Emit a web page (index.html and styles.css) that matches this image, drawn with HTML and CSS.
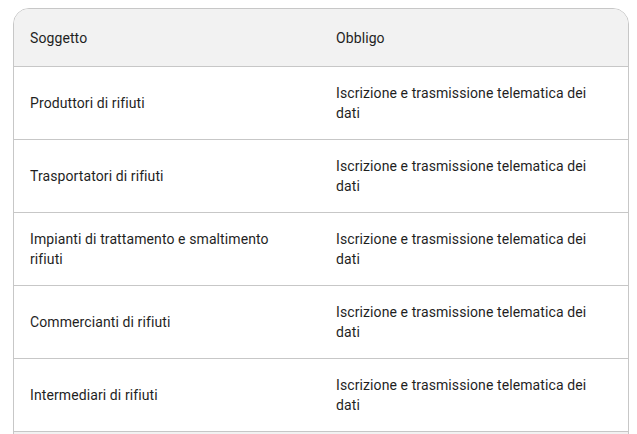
FILE: index.html
```html
<!DOCTYPE html>
<html lang="it">
<head>
<meta charset="utf-8">
<link rel="stylesheet" href="styles.css">
</head>
<body>
<div class="card">
  <table class="grid">
    <thead>
      <tr><th class="c1">Soggetto</th><th class="c2">Obbligo</th></tr>
    </thead>
    <tbody>
      <tr><td class="c1">Produttori di rifiuti</td><td class="c2">Iscrizione e trasmissione telematica dei dati</td></tr>
      <tr><td class="c1">Trasportatori di rifiuti</td><td class="c2">Iscrizione e trasmissione telematica dei dati</td></tr>
      <tr><td class="c1">Impianti di trattamento e smaltimento rifiuti</td><td class="c2">Iscrizione e trasmissione telematica dei dati</td></tr>
      <tr><td class="c1">Commercianti di rifiuti</td><td class="c2">Iscrizione e trasmissione telematica dei dati</td></tr>
      <tr><td class="c1">Intermediari di rifiuti</td><td class="c2">Iscrizione e trasmissione telematica dei dati</td></tr>
      <tr class="more"><td class="c1">&nbsp;</td><td class="c2">&nbsp;</td></tr>
    </tbody>
  </table>
</div>
</body>
</html>
```

FILE: styles.css
```css
html, body {
  margin: 0;
  padding: 0;
  background: #ffffff;
}
body {
  padding: 8px 0 0 13px;
  font-family: Roboto, "Liberation Sans", sans-serif;
  font-size: 14px;
  line-height: 20px;
  letter-spacing: 0.1px;
  color: #1f1f1f;
}
.card {
  width: 614px;
  border: 1px solid #c7c7c7;
  border-radius: 16px;
  overflow: hidden;
}
.grid {
  width: 100%;
  border-collapse: collapse;
  table-layout: fixed;
}
.grid th,
.grid td {
  text-align: left;
  vertical-align: middle;
  padding: 16px 26px 16px 16px;
  font-weight: 400;
}
.grid .c1 { width: 264px; }
.grid th {
  background: #f2f2f2;
  padding-top: 19px;
  padding-bottom: 18px;
}
.grid tbody tr {
  height: 73px;
}
.grid tbody td {
  border-top: 1px solid #c7c7c7;
}
.grid tbody tr.more td {
  background: #f2f2f2;
}
```
